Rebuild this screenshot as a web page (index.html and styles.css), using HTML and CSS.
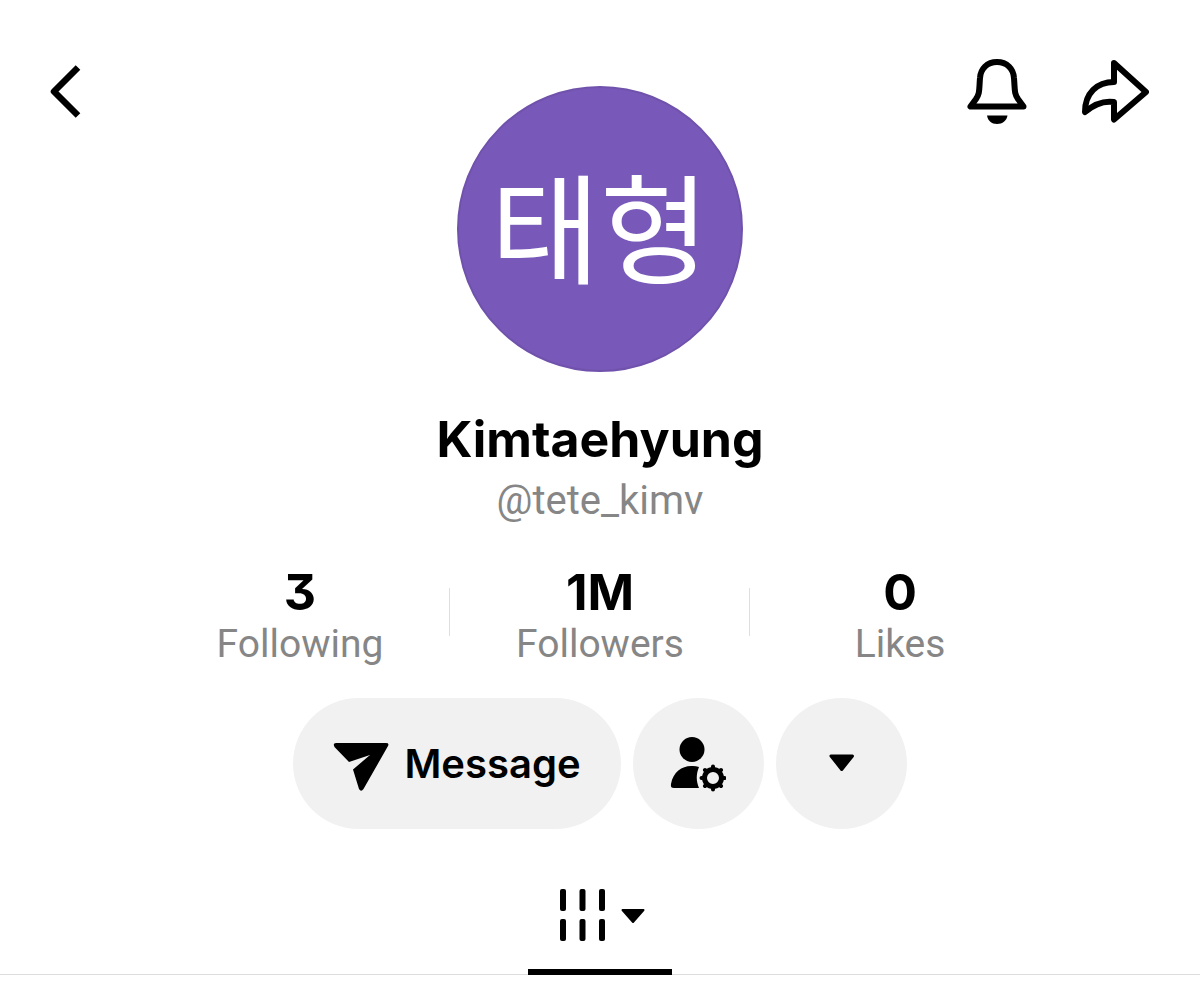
FILE: index.html
```html
<!DOCTYPE html>
<html lang="en">
<head>
<meta charset="utf-8">
<meta name="viewport" content="width=device-width, initial-scale=1">
<title>Kimtaehyung (@tete_kimv)</title>
<link rel="stylesheet" href="styles.css">
</head>
<body>
<header class="top">
  <button class="icon-button" type="button" aria-label="Back">
    <svg width="32" height="54" viewBox="0 0 32 54" fill="none" stroke="#000" stroke-width="6.500" stroke-linejoin="round"><path d="M28 3.500 4 27.500l24 24"/></svg>
  </button>
  <div class="avatar" lang="ko">태형</div>
  <div class="actions">
    <button class="icon-button" type="button" aria-label="Notifications">
      <svg width="60" height="68" viewBox="0 0 60 68" fill="none" stroke="#000" stroke-width="6" stroke-linejoin="round"><path d="M30 5C20 5 13.500 12 13 21C12 33 13 36 9 42L3.500 49.500H56.500L51 42C47 36 48 33 47 21C46.500 12 40 5 30 5Z"/><path d="M20 58.500H40.500C39.500 64 35.500 67 30 67S21 64 20 58.500Z" fill="#000" stroke="none"/></svg>
    </button>
    <button class="icon-button" type="button" aria-label="Share">
      <svg width="68" height="64" viewBox="0 0 68 64" fill="none" stroke="#000" stroke-width="6" stroke-linejoin="round"><path d="M33 4 65 33 33 60.500V43C20 41 11 47 4 53C4 34 16 23 33 23Z"/></svg>
    </button>
  </div>
</header>
<main class="profile">
  <h1 class="name">Kimtaehyung</h1>
  <p class="handle">@tete_kimv</p>
  <ul class="stats">
    <li class="stat"><strong class="count">3</strong><span class="label">Following</span></li>
    <li class="stat"><strong class="count">1M</strong><span class="label">Followers</span></li>
    <li class="stat"><strong class="count">0</strong><span class="label">Likes</span></li>
  </ul>
  <div class="buttons">
    <button class="pill message" type="button">
      <svg width="56" height="56" viewBox="0 -6 56 56"><path d="M3 1H53Q56.500 1 55 4L30.500 47Q28 50.500 26 47L20 27.500 37 13 16 20 1.500 5Q-.5 1 3 1Z"/></svg>
      Message
    </button>
    <button class="pill round" type="button" aria-label="Manage follow">
      <svg width="56" height="56" viewBox="1 0 56 56"><circle cx="23" cy="13.500" r="12.500"/><path d="M5 52C2.500 52 1.500 51 2 48C4 36 13 30 22 30Q26 29.500 30 31C27 38 27 45 30 52Z"/><g stroke="#000" stroke-width="4" stroke-linecap="round"><path d="M44 30.500v23M32.500 42h23M36 34l16 16M36 50l16-16"/></g><circle cx="44" cy="42" r="8.500" fill="#f1f1f1" stroke="#000" stroke-width="5"/></svg>
    </button>
    <button class="pill round" type="button" aria-label="More accounts">
      <svg width="26" height="20" viewBox="0 0 26 20" stroke="#000" stroke-width="3" stroke-linejoin="round"><path d="M3 2H24.500L13.700 15.500Z"/></svg>
    </button>
  </div>
</main>
<nav class="tabs">
  <button class="tab" type="button" aria-label="Videos">
    <svg width="46" height="54" viewBox="0 0 46 54"><rect x="0" y="1" width="6" height="22" rx="2"/><rect x="19.500" y="1" width="6" height="22" rx="2"/><rect x="39" y="1" width="6" height="22" rx="2"/><rect x="0" y="31" width="6" height="22" rx="2"/><rect x="19.500" y="31" width="6" height="22" rx="2"/><rect x="39" y="31" width="6" height="22" rx="2"/></svg>
    <svg width="24" height="16" viewBox="0 0 24 16" stroke="#000" stroke-width="2" stroke-linejoin="round"><path d="M1.500 2H22.500L12 14Z"/></svg>
  </button>
</nav>
</body>
</html>
```
FILE: styles.css
```css
* {
  box-sizing: border-box;
}

body {
  margin: 0;
  background: #fff;
  color: #000;
  font-family: Inter, "Noto Sans CJK KR", sans-serif;
}

svg {
  display: block;
  flex: none;
}

button {
  margin: 0;
  padding: 0;
  border: 0;
  background: none;
  color: inherit;
  font: inherit;
  cursor: pointer;
}

.top {
  display: grid;
  grid-template-columns: 1fr auto 1fr;
  align-items: start;
  padding: 56px 50px 0;
}

.icon-button {
  display: flex;
  align-items: center;
  justify-self: start;
  height: 70px;
}

.avatar {
  display: flex;
  align-items: center;
  justify-content: center;
  width: 286px;
  height: 286px;
  margin-top: 30px;
  padding-bottom: 12px;
  border: 2px solid #7052ac;
  border-radius: 50%;
  background: #7859b9;
  color: #fff;
  font: 400 119px/1 "Noto Sans CJK KR", sans-serif;
}

.actions {
  display: flex;
  justify-content: flex-end;
  gap: 54px;
  padding-right: 1px;
}

.profile {
  display: flex;
  flex-direction: column;
  align-items: center;
}

.name {
  margin: 35px 0 0;
  font-size: 50px;
  font-weight: 700;
  line-height: 64px;
}

.handle {
  margin: 4px 0 0;
  color: #868686;
  font: 40px/52px Roboto, sans-serif;
}

.stats {
  display: grid;
  grid-template-columns: repeat(3, 1fr);
  width: 75%;
  margin: 36px 0 0;
  padding: 0;
  list-style: none;
}

.stat {
  display: flex;
  flex-direction: column;
  align-items: center;
  background: linear-gradient(#dedede, #dedede) right 25px / 1px 48px no-repeat;
}

.stat:last-child {
  background: none;
}

.count {
  font-size: 50px;
  font-feature-settings: "cv09";
  line-height: 58px;
}

.label {
  color: #868686;
  font: 39px/46px Roboto, sans-serif;
}

.buttons {
  display: flex;
  gap: 12px;
  margin-top: 31px;
}

.pill {
  display: flex;
  align-items: center;
  justify-content: center;
  height: 131px;
  border-radius: 66px;
  background: #f1f1f1;
}

.message {
  gap: 15px;
  padding: 0 40px;
  font-size: 40px;
  font-weight: 600;
}

.round {
  width: 131px;
}

.tabs {
  display: flex;
  justify-content: center;
  margin-top: 59px;
  box-shadow: inset 0 -1px #dedede;
}

.tab {
  display: flex;
  align-items: flex-start;
  justify-content: center;
  gap: 15px;
  width: 144px;
  height: 87px;
  padding-left: 4px;
  border-bottom: 6px solid #000;
}

.tab svg:last-child {
  margin-top: 20px;
}
```
